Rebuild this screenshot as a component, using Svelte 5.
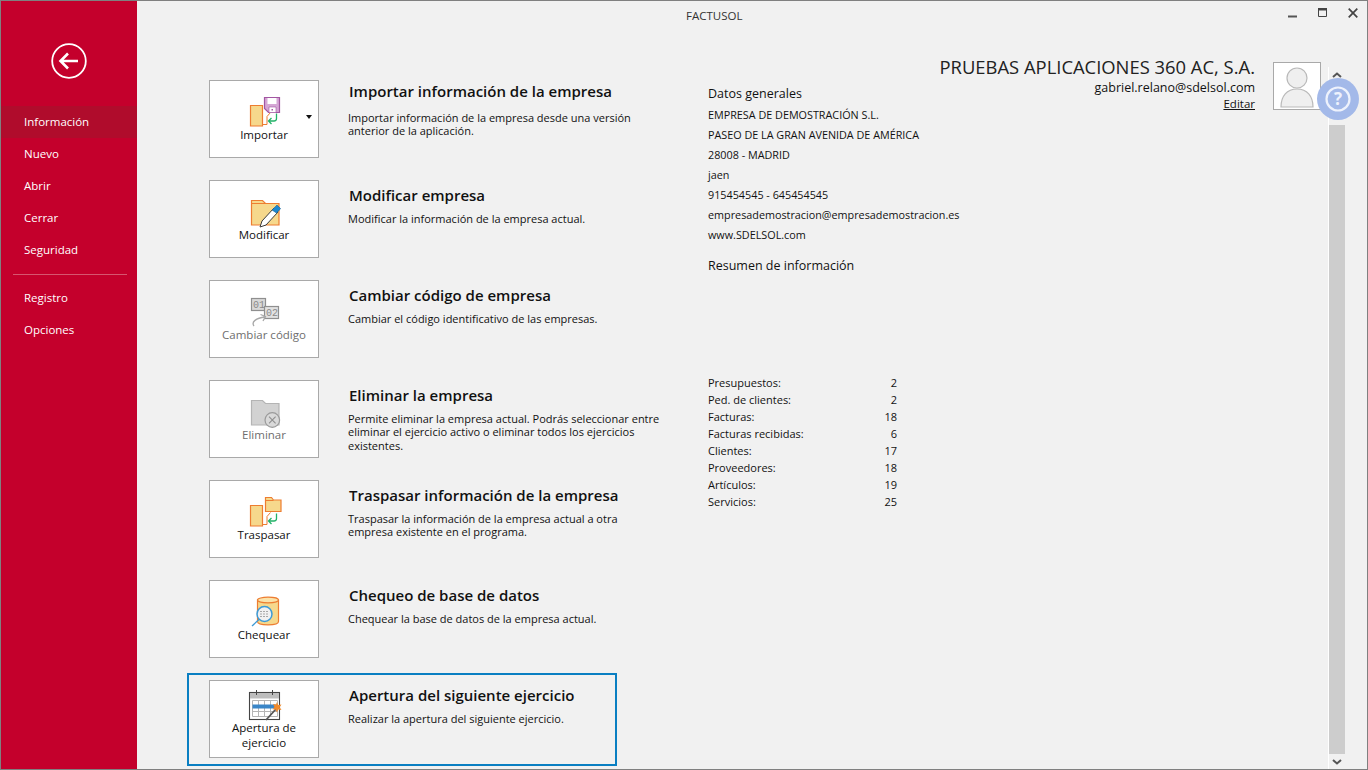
<script>
  const menuTop = ['Información', 'Nuevo', 'Abrir', 'Cerrar', 'Seguridad'];
  const menuBottom = ['Registro', 'Opciones'];

  const actions = [
    { id: 'importar', label: 'Importar', title: 'Importar información de la empresa', text: 'Importar información de la empresa desde una versión\nanterior de la aplicación.', arrow: true },
    { id: 'modificar', label: 'Modificar', title: 'Modificar empresa', text: 'Modificar la información de la empresa actual.' },
    { id: 'cambiar', label: 'Cambiar código', title: 'Cambiar código de empresa', text: 'Cambiar el código identificativo de las empresas.', disabled: true },
    { id: 'eliminar', label: 'Eliminar', title: 'Eliminar la empresa', text: 'Permite eliminar la empresa actual. Podrás seleccionar entre\neliminar el ejercicio activo o eliminar todos los ejercicios\nexistentes.', disabled: true },
    { id: 'traspasar', label: 'Traspasar', title: 'Traspasar información de la empresa', text: 'Traspasar la información de la empresa actual a otra\nempresa existente en el programa.' },
    { id: 'chequear', label: 'Chequear', title: 'Chequeo de base de datos', text: 'Chequear la base de datos de la empresa actual.' },
    { id: 'apertura', label: 'Apertura de\nejercicio', title: 'Apertura del siguiente ejercicio', text: 'Realizar la apertura del siguiente ejercicio.', focused: true }
  ];

  const datos = [
    'EMPRESA DE DEMOSTRACIÓN S.L.',
    'PASEO DE LA GRAN AVENIDA DE AMÉRICA',
    '28008 - MADRID',
    'jaen',
    '915454545 - 645454545',
    'empresademostracion@empresademostracion.es',
    'www.SDELSOL.com'
  ];

  const stats = [
    ['Presupuestos:', 2],
    ['Ped. de clientes:', 2],
    ['Facturas:', 18],
    ['Facturas recibidas:', 6],
    ['Clientes:', 17],
    ['Proveedores:', 18],
    ['Artículos:', 19],
    ['Servicios:', 25]
  ];
</script>

{#snippet transfer()}
  <path d="M6.500 11.500h12v20.500h-12z" fill="#f6d88c" stroke="#ed7d31" stroke-width="1.200" />
  <path d="M19 30.500h4v-8l3.500-4" fill="none" stroke="#ed7d31" />
  <path d="M32.500 19.500v5q0 2.500-2.500 2.500h-5.500M27.500 24l-3 3 3 3" fill="none" stroke="#22b268" stroke-width="1.300" />
{/snippet}

{#snippet icon(id)}
  <svg class="icon" class:tall={id === 'apertura'} width="40" height="36" viewBox="0 0 40 36">
    {#if id === 'importar'}
      {@render transfer()}
      <path d="M20.500 3.500h15v15h-11l-4-4z" fill="#d5a6d5" stroke="#a256a2" stroke-width="1.200" />
      <path d="M23.500 4h9v6h-9z" fill="#fff" />
      <path d="M25 13h7v5.500h-7z" fill="#fff" stroke="#a256a2" stroke-width=".6" />
      <path d="M27.500 15h1.500v1.500h-1.500z" fill="#a256a2" />
    {:else if id === 'modificar'}
      <path d="M7.500 31v-24.500h11l3 3h13.500v21.500z" fill="#f6d88c" stroke="#ed7d31" stroke-width="1.200" />
      <path d="M7.500 9.500h14" stroke="#ed7d31" fill="none" />
      <path d="M16 33l2-6 12-13 4 4-12 13z" fill="#fff" stroke="#3c3c3c" stroke-width="1" />
      <path d="M28 16l3.500-3.500 1.500-1.500 3.500 3.500-1.500 2-2.500 2.500z" fill="#1b87cf" stroke="#135f96" stroke-width=".6" />
    {:else if id === 'cambiar'}
      <rect x="7.500" y="4.500" width="14" height="12" fill="#d9d9d9" stroke="#8f8f8f" stroke-width="1.200" />
      <text class="digits" x="9" y="14">01</text>
      <rect x="20.500" y="12.500" width="14" height="12" fill="#e2e2e2" stroke="#8f8f8f" stroke-width="1.200" />
      <text class="digits" x="22" y="22">02</text>
      <path d="M10 32c-3-4 2-8 11-9M16.500 20.500l5 2-2.500 4.500" fill="none" stroke="#a8a8a8" stroke-width="1.300" />
    {:else if id === 'eliminar'}
      <path d="M7.500 31v-24.500h11l3 3h13.500v21.500z" fill="#d2d2d2" stroke="#b4b4b4" stroke-width="1.200" />
      <circle cx="28.300" cy="26" r="7.300" fill="#d9d9d9" stroke="#9a9a9a" stroke-width="1.200" />
      <path d="M25 22.700l6.600 6.600M31.600 22.700l-6.600 6.600" stroke="#8f8f8f" stroke-width="1.100" />
    {:else if id === 'traspasar'}
      {@render transfer()}
      <path d="M21.500 17.500v-14h6l2 2.500h7.500v11.500z" fill="#f6d88c" stroke="#ed7d31" stroke-width="1.200" />
      <path d="M21.500 6.500h8" stroke="#ed7d31" fill="none" />
    {:else if id === 'chequear'}
      <path d="M13.500 6v21.500c0 4.500 21 4.500 21 0v-21.500z" fill="#f6d88c" stroke="#ed7d31" stroke-width="1.200" />
      <ellipse cx="24" cy="6" rx="10.500" ry="2.800" fill="#fbe3a9" stroke="#ed7d31" stroke-width="1.200" />
      <path d="M8 32l7.500-7" stroke="#3d9ad6" stroke-width="1.300" />
      <circle cx="20.500" cy="20" r="7.500" fill="#f1f1f1" stroke="#3d9ad6" stroke-width="1.500" />
      <path d="M16 17.500h9M16 20h9M16 22.500h9" stroke="#a8a8a8" stroke-dasharray="2 1" />
    {:else if id === 'apertura'}
      <rect x="5.500" y="5.500" width="30" height="27" fill="#fff" stroke="#444" stroke-width="1.100" />
      <rect x="6" y="6" width="29" height="5.500" fill="#bdbdbd" />
      <path d="M12.500 3v5M28.500 3v5" stroke="#444" />
      <path d="M8.500 13.500h25v16h-25zM8.500 19h25M8.500 24.500h25M14.500 13.500v16M20.500 13.500v16M26.500 13.500v16" fill="none" stroke="#b5b5b5" />
      <rect x="8.500" y="17.500" width="24" height="4" fill="#3a86c8" />
      <path d="M22 33l10-11" stroke="#555" stroke-width="1.800" />
      <path d="M33 15l1.200 3 3.300-.5-1.800 2.700 1.800 2.800-3.300-.5-1.200 3-1.500-3-3-.3 2-2.300-1.500-2.900 3 .4z" fill="#f08a2c" />
    {/if}
  </svg>
{/snippet}

<div class="window">
  <nav class="sidebar">
    <div class="back">
      <svg width="36" height="36" viewBox="0 0 36 36">
        <circle cx="18" cy="18" r="16.800" fill="none" stroke="#fff" stroke-width="1.800" />
        <path d="M27 18h-17M17 10.500l-7.500 7.500 7.500 7.500" fill="none" stroke="#fff" stroke-width="2.600" />
      </svg>
    </div>
    {#each menuTop as item, i}
      <div class="menu-item" class:active={i === 0}>{item}</div>
    {/each}
    <div class="menu-sep"></div>
    {#each menuBottom as item}
      <div class="menu-item">{item}</div>
    {/each}
  </nav>

  <div class="main">
    <header class="titlebar">
      <span class="app-title">FACTUSOL</span>
      <div class="controls">
        <svg width="10" height="10" viewBox="0 0 10 10"><path d="M0 7.500h9v2h-9z" fill="#555" /></svg>
        <svg width="10" height="10" viewBox="0 0 10 10"><path d="M.5 .5h8v8h-8z" fill="none" stroke="#444" /><path d="M0 0h9v2.500h-9z" fill="#444" /></svg>
        <svg width="10" height="10" viewBox="0 0 10 10"><path d="M.7 .7l8.600 8.600M9.300 .7l-8.600 8.600" stroke="#444" stroke-width="1.700" /></svg>
      </div>
    </header>

    <div class="content">
      <section class="rows">
        {#each actions as a}
          <div class="row" class:focused={a.focused}>
            <div class="tile" class:disabled={a.disabled}>
              {@render icon(a.id)}
              <span class="tile-label">{a.label}</span>
              {#if a.arrow}<span class="caret"></span>{/if}
            </div>
            <div class="row-text">
              <h2>{a.title}</h2>
              <p>{a.text}</p>
            </div>
          </div>
        {/each}
      </section>

      <section class="info">
        <h3>Datos generales</h3>
        <div class="datos">
          {#each datos as line}
            <div>{line}</div>
          {/each}
        </div>
        <h3 class="resumen">Resumen de información</h3>
        <div class="stats">
          {#each stats as [name, value]}
            <div class="stat"><span>{name}</span><span>{value}</span></div>
          {/each}
        </div>
      </section>

      <section class="account">
        <div class="account-text">
          <div class="company">PRUEBAS APLICACIONES 360 AC, S.A.</div>
          <div class="email">gabriel.relano@sdelsol.com</div>
          <div class="edit">Editar</div>
        </div>
        <div class="avatar">
          <svg width="46" height="46" viewBox="0 0 46 46">
            <circle cx="23" cy="15" r="10" fill="#efefef" stroke="#b9b9b9" stroke-width="1.200" />
            <path d="M7 44c0-11 6-18 16-18s16 7 16 18z" fill="#efefef" stroke="#b9b9b9" stroke-width="1.200" />
          </svg>
        </div>
      </section>

      <div class="scrollbar">
        <svg width="16" height="16" viewBox="0 0 16 16"><path d="M4 10l4-3.500 4 3.500" fill="none" stroke="#555" stroke-width="2" /></svg>
        <div class="thumb"></div>
        <svg width="16" height="16" viewBox="0 0 16 16"><path d="M4 6l4 3.500 4-3.500" fill="none" stroke="#555" stroke-width="2" /></svg>
      </div>
    </div>
  </div>

  <div class="help">
    <svg width="42" height="42" viewBox="0 0 42 42">
      <circle cx="21" cy="21" r="21" fill="#a3b9e9" />
      <circle cx="21" cy="21" r="11.500" fill="none" stroke="#eef2fc" stroke-width="2.200" />
      <text x="21" y="27" text-anchor="middle" class="help-mark">?</text>
    </svg>
  </div>
</div>

<style>
  :global(body) {
    margin: 0;
    background: #f1f1f1;
  }

  .window {
    position: relative;
    display: flex;
    box-sizing: border-box;
    width: 1368px;
    height: 770px;
    overflow: hidden;
    border: 1px solid #808080;
    background: #f1f1f1;
    color: #111;
    font-family: "Open Sans", "Noto Sans", sans-serif;
  }

  /* sidebar */
  .sidebar {
    flex: none;
    width: 136px;
    background: #c4002c;
    color: #fff;
  }
  .back {
    display: flex;
    justify-content: center;
    height: 105px;
    padding-top: 42px;
    box-sizing: border-box;
  }
  .menu-item {
    height: 32px;
    padding-left: 23px;
    font-size: 11.500px;
    line-height: 32px;
  }
  .menu-item.active {
    background: #b00c2c;
  }
  .menu-sep {
    height: 1px;
    margin: 8px 10px 7px 12px;
    background: #d6566f;
  }

  /* main */
  .main {
    flex: 1;
    display: flex;
    flex-direction: column;
    min-width: 0;
  }
  .titlebar {
    flex: none;
    display: flex;
    align-items: center;
    height: 30px;
  }
  .app-title {
    margin-left: 549px;
    margin-top: -2px;
    font-size: 11.500px;
    color: #333;
  }
  .controls {
    display: flex;
    gap: 20px;
    margin-left: auto;
    margin-right: 9px;
    margin-top: -7px;
  }
  .content {
    flex: 1;
    display: flex;
    padding: 42px 0 0 50px;
    min-height: 0;
  }

  /* action rows */
  .rows {
    flex: none;
    width: 430px;
  }
  .row {
    display: flex;
    gap: 30px;
    box-sizing: border-box;
    height: 93px;
    margin-bottom: 7px;
    padding: 5px 20px;
    border: 2px solid transparent;
  }
  .row.focused {
    border-color: #0a7fc2;
  }
  .tile {
    position: relative;
    flex: none;
    display: flex;
    flex-direction: column;
    align-items: center;
    box-sizing: border-box;
    width: 110px;
    height: 78px;
    padding-top: 13px;
    border: 1px solid #a9a9a9;
    background: #fff;
  }
  .icon {
    flex: none;
    height: 36px;
    margin-bottom: -3px;
  }
  .icon.tall {
    margin-top: -7px;
  }
  .tile-label {
    font-size: 11.500px;
    line-height: 15px;
    text-align: center;
    white-space: pre-line;
  }
  .tile.disabled .tile-label {
    color: #6e6e6e;
  }
  .caret {
    position: absolute;
    top: 34px;
    right: 6px;
    border-style: solid;
    border-width: 4px 3.500px 0;
    border-color: #111 transparent transparent;
  }
  .row-text {
    min-width: 0;
    white-space: nowrap;
  }
  h2 {
    margin: 0;
    padding-top: 5px;
    font-size: 15px;
    font-weight: 600;
    line-height: 20px;
  }
  p {
    margin: 7px 0 0 -1px;
    font-size: 11px;
    line-height: 13.400px;
    white-space: pre;
  }
  /* the first row sits a little tighter at the top in the original */
  .row:first-child h2 {
    padding-top: 1px;
  }
  .row:first-child p {
    margin-top: 10px;
  }

  /* info column */
  .info {
    flex: none;
    width: 260px;
    margin-left: 91px;
    padding-top: 11px;
    font-size: 11px;
  }
  h3 {
    margin: 0;
    font-size: 12.500px;
    font-weight: 400;
    line-height: 20px;
  }
  .datos {
    margin-top: 1px;
    font-size: 10.800px;
    line-height: 20px;
    white-space: nowrap;
  }
  .resumen {
    margin-top: 11px;
  }
  .stats {
    width: 189px;
    margin-top: 98px;
  }
  .stat {
    display: flex;
    justify-content: space-between;
    height: 17px;
    line-height: 17px;
  }

  /* account */
  .account {
    flex: 1;
    display: flex;
    justify-content: flex-end;
    gap: 18px;
    margin-top: -14px;
    min-width: 0;
  }
  .account-text {
    text-align: right;
    white-space: nowrap;
  }
  .company {
    margin-top: -5px;
    font-size: 18.400px;
    line-height: 26px;
    color: #222;
  }
  .email {
    font-size: 12.500px;
    line-height: 16px;
  }
  .edit {
    margin-top: -1px;
    font-size: 11.500px;
    line-height: 17px;
    text-decoration: underline;
  }
  .avatar {
    box-sizing: border-box;
    width: 48px;
    height: 48px;
    margin-top: 3px;
    border: 1px solid #a9a9a9;
    background: #fff;
  }

  /* scrollbar */
  .scrollbar {
    flex: none;
    display: flex;
    flex-direction: column;
    align-items: center;
    width: 16px;
    margin: -6px 22px 0 7px;
    border-left: 1px solid #fff;
  }
  .thumb {
    flex: none;
    width: 16px;
    height: 629px;
    margin-top: 42px;
    background: #cdcdcd;
  }
  .scrollbar svg {
    flex: none;
  }

  .help {
    position: absolute;
    top: 77px;
    left: 1316px;
    width: 42px;
    height: 42px;
  }
  .digits {
    font-family: "Liberation Mono", monospace;
    font-size: 10px;
    fill: #8a8a8a;
  }
  .help-mark {
    font-family: "Open Sans", sans-serif;
    font-size: 17px;
    font-weight: 700;
    fill: #eef2fc;
  }
</style>
